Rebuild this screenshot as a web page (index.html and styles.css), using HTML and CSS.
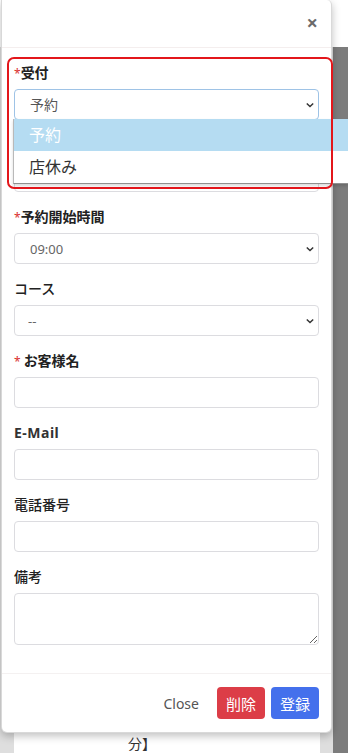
FILE: index.html
```html
<!DOCTYPE html>
<html lang="ja">
  <head>
    <meta charset="UTF-8" />
    <meta name="viewport" content="width=device-width, initial-scale=1.0" />
    <title>予約登録</title>
    <link rel="stylesheet" href="styles.css">
  </head>

  <body>
    <div class="page">
      <div class="page-top"></div>
      <div class="page-main">
        <div class="page-content">
          <div class="slot-card">
            <div class="slot-line">09:00 - 10:00 ◎ お客様名 【コース 60</div>
            <div class="slot-line slot-line-wrap">分】</div>
          </div>
        </div>
        <div class="page-rail"></div>
      </div>
    </div>

    <div class="modal">
      <div class="modal-header">
        <button type="button" class="modal-close">&times;</button>
      </div>

      <div class="modal-body">
        <div class="field field-open">
          <label><span class="req">*</span>受付</label>
          <div class="select-wrap">
            <select class="form-select is-focused">
              <option>予約</option>
              <option>店休み</option>
            </select>
            <svg class="chevron" viewBox="0 0 10 6"><path d="M1 1l4 4 4-4" /></svg>
          </div>
          <ul class="dropdown">
            <li class="active">予約</li>
            <li>店休み</li>
          </ul>
        </div>

        <!-- covered by the open list -->
        <div class="field">
          <label class="label-covered"><span class="req">*</span>予約日</label>
          <input type="text" class="form-input" />
        </div>

        <div class="field">
          <label><span class="req">*</span>予約開始時間</label>
          <div class="select-wrap">
            <select class="form-select">
              <option>09:00</option>
            </select>
            <svg class="chevron" viewBox="0 0 10 6"><path d="M1 1l4 4 4-4" /></svg>
          </div>
        </div>

        <div class="field">
          <label class="label-light">コース</label>
          <div class="select-wrap">
            <select class="form-select select-dash">
              <option>--</option>
            </select>
            <svg class="chevron" viewBox="0 0 10 6"><path d="M1 1l4 4 4-4" /></svg>
          </div>
        </div>

        <div class="field">
          <label><span class="req req-gap">*</span>お客様名</label>
          <input type="text" class="form-input" />
        </div>

        <div class="field">
          <label class="label-latin">E-Mail</label>
          <input type="email" class="form-input" />
        </div>

        <div class="field">
          <label class="label-light">電話番号</label>
          <input type="tel" class="form-input" />
        </div>

        <div class="field">
          <label class="label-light">備考</label>
          <textarea class="form-input form-textarea"></textarea>
        </div>
      </div>

      <div class="modal-footer">
        <button type="button" class="btn btn-link">Close</button>
        <button type="button" class="btn btn-danger">削除</button>
        <button type="button" class="btn btn-primary">登録</button>
      </div>
    </div>

    <div class="annotation"></div>
  </body>
</html>
```

FILE: styles.css
```css
* {
  margin: 0;
  padding: 0;
  box-sizing: border-box;
  font-family: "Noto Sans", "Noto Sans CJK JP", sans-serif;
}

body {
  width: 348px;
  height: 753px;
  overflow: hidden;
  position: relative;
  background: #ffffff;
}

/* page behind the modal */

.page {
  display: flex;
  flex-direction: column;
  height: 753px;
}

.page-top {
  height: 47px;
  background: #ffffff;
}

.page-main {
  flex: 1;
  display: flex;
}

.page-content {
  flex: 1;
  display: flex;
  flex-direction: column;
  justify-content: flex-end;
  background: #dedede;
}

.page-rail {
  width: 15px;
  background: #7c7c7c;
}

.slot-card {
  margin: 0 13px 0 14px;
  padding: 0 6px;
  height: 36px;
  background: #ffffff;
  font-size: 14px;
  line-height: 18px;
  color: #333;
}

.slot-line-wrap {
  padding-left: 108px;
}

/* modal */

.modal {
  position: absolute;
  top: 0;
  left: 1px;
  width: 331px;
  height: 733px;
  background: #ffffff;
  border: 1px solid rgba(0, 0, 0, 0.15);
  border-top: none;
  border-radius: 0 5px 6px 6px;
  box-shadow: 0 3px 8px rgba(0, 0, 0, 0.25);
  display: flex;
  flex-direction: column;
}

.modal-header {
  height: 48px;
  border-bottom: 1px solid #f4eeee;
  display: flex;
  justify-content: flex-end;
  align-items: center;
  padding-right: 11px;
}

.modal-close {
  border: none;
  background: none;
  font-size: 20px;
  line-height: 20px;
  font-weight: bold;
  color: #6b6b6b;
  padding: 2px 2px 4px;
}

.modal-body {
  flex: 1;
  padding: 14px 12px 0 12px;
}

.field {
  display: flex;
  flex-direction: column;
  margin-bottom: 14px;
  position: relative;
}

label {
  display: block;
  height: 21px;
  font-size: 14px;
  line-height: 21px;
  margin-bottom: 6px;
  font-weight: 600;
  color: #222;
}

.label-light {
  font-weight: 500;
}

.label-latin {
  font-weight: 700;
  letter-spacing: 0.5px;
  color: #333;
}

.label-covered {
  visibility: hidden;
}

.req {
  color: #d9302e;
  font-weight: 400;
  font-size: 12px;
  line-height: 0;
}

.req-gap {
  margin-right: 3px;
}

.select-wrap {
  position: relative;
}

.form-select,
.form-input {
  display: block;
  width: 100%;
  height: 31px;
  border: 1px solid #dcdce0;
  border-radius: 4px;
  background: #ffffff;
  font-size: 13px;
  color: #666;
  padding: 0 15px;
  outline: none;
}

.form-select {
  appearance: none;
  -webkit-appearance: none;
}

.is-focused {
  border-color: #9ec3e6;
  font-size: 14px;
  color: #555;
}

.select-dash {
  padding-left: 13px;
}

.form-textarea {
  height: 52px;
  resize: vertical;
}

.chevron {
  position: absolute;
  right: 5px;
  top: 13px;
  width: 8px;
  height: 6px;
  fill: none;
  stroke: #333;
  stroke-width: 1.8;
}

/* opened list of the first select */

.dropdown {
  position: absolute;
  top: 57px;
  left: -1px;
  width: 335px;
  list-style: none;
  background: #ffffff;
  border-left: 1px solid #b9b9b9;
  border-bottom: 1px solid #8f8f8f;
  box-shadow: 0 2px 3px rgba(0, 0, 0, 0.15);
  z-index: 5;
}

.dropdown li {
  height: 32px;
  line-height: 32px;
  padding-left: 15px;
  font-size: 16px;
  color: #333;
}

.dropdown li.active {
  background: #b5dcf2;
  color: #ffffff;
}

/* footer */

.modal-footer {
  height: 59px;
  border-top: 1px solid #f4f1f1;
  display: flex;
  justify-content: flex-end;
  align-items: center;
  gap: 6px;
  padding: 0 12px;
}

.btn {
  height: 32px;
  border: none;
  border-radius: 4px;
  font-size: 15px;
  padding: 0 9px;
  color: #ffffff;
}

.btn-link {
  background: none;
  color: #555;
  font-size: 14px;
  padding: 0 12px;
}

.btn-danger {
  background: #dc3d47;
}

.btn-primary {
  background: #4470ec;
}

/* red highlight drawn on the screenshot */

.annotation {
  position: absolute;
  left: 7px;
  top: 57px;
  width: 326px;
  height: 132px;
  border: 2px solid #e3161b;
  border-radius: 7px;
  z-index: 10;
}
```
